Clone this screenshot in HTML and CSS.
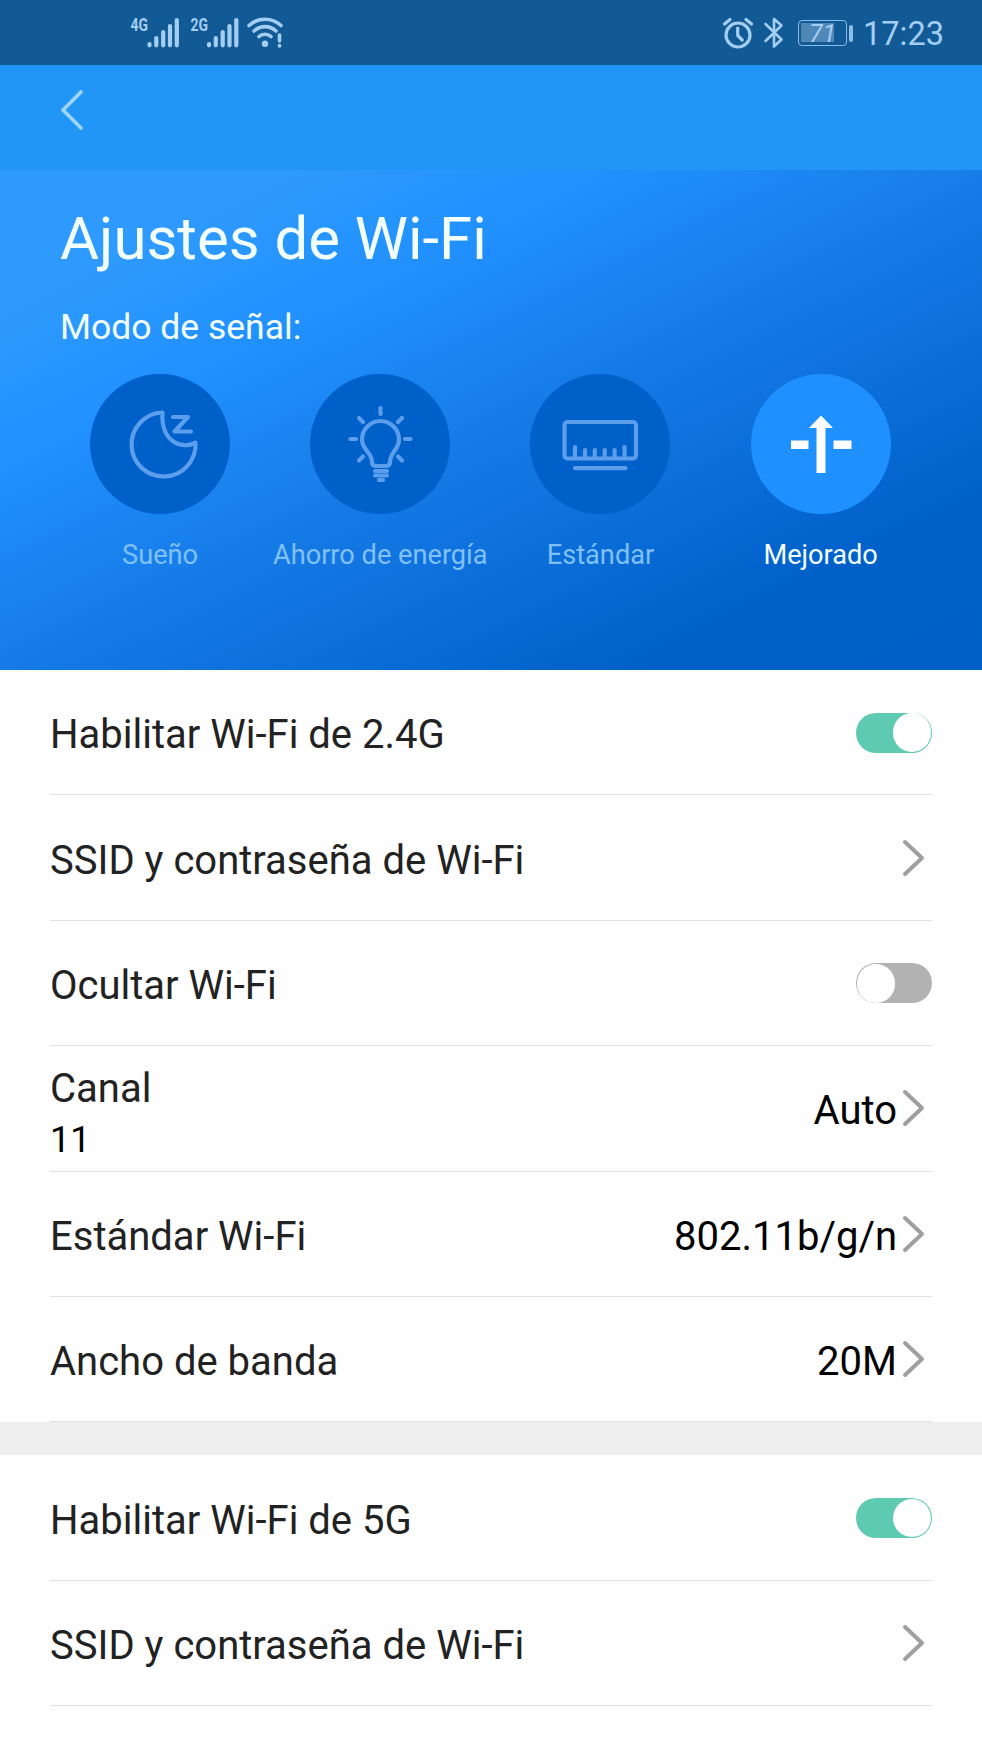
FILE: index.html
```
<!DOCTYPE html>
<html lang="es">
<head>
    <meta charset="UTF-8">
    <meta name="viewport" content="width=device-width, initial-scale=1.0">
    <title>Ajustes de Wi-Fi</title>
    <link rel="stylesheet" href="styles.css">
</head>
<body>

<div class="status-bar">
    <div class="status-left">
        <svg class="signal" width="55" height="40" viewBox="-3 -3 55 40">
            <text x="-0.5" y="15" textLength="17.5" lengthAdjust="spacingAndGlyphs">4G</text>
            <path d="M18.5 28V29.3M25.3 22V29.3M32.2 16V29.3M39 10V29.3M45.8 4V29.3"/>
        </svg>
        <svg class="signal" width="55" height="40" viewBox="-3 -3 55 40">
            <text x="-0.5" y="15" textLength="17.5" lengthAdjust="spacingAndGlyphs">2G</text>
            <path d="M18 28V29.3M24.8 22V29.3M31.7 16V29.3M38.5 10V29.3M45.3 4V29.3"/>
        </svg>
        <svg class="wifi" width="40" height="34" viewBox="0 0 40 34">
            <path d="M3 9.5a23.5 23.5 0 0 1 32 0M8 15a16 16 0 0 1 22 0M13 20.5a9 9 0 0 1 12 0M33.5 19v6M33.5 29.5v.5"/>
            <circle cx="19" cy="27.7" r="3.2"/>
        </svg>
    </div>
    <div class="status-right">
        <svg class="alarm" width="30" height="34" viewBox="0 0 30 34">
            <circle cx="15" cy="18" r="12"/>
            <path d="M14.7 11v7.5l4.5 4.5M1.5 7l5.5-4.5M23 2.5l5.5 4.5"/>
        </svg>
        <svg class="bluetooth" width="20" height="34" viewBox="0 0 20 34">
            <path d="M1.5 8l16 15.5-7.5 7V3l7.5 6.5L1.5 25"/>
        </svg>
        <div class="battery"><div class="battery-body"><span>71</span></div><div class="battery-tip"></div></div>
        <span class="time">17:23</span>
    </div>
</div>

<div class="top-bar">
    <svg class="back" width="26" height="44" viewBox="0 0 26 44">
        <path d="M21 4L3 22l18 18"/>
    </svg>
</div>

<div class="hero">
    <h1>Ajustes de Wi-Fi</h1>
    <p class="subtitle">Modo de señal:</p>
    <div class="modes">
        <div class="mode">
            <div class="circle">
                <svg width="140" height="140" viewBox="0 0 140 140">
                    <path d="M72.5 38.5A32 32 0 1 0 105.5 68.5C93.5 76 70.5 69 72.5 38.5Z"/>
                    <path d="M83 43H98L84.5 57.5H101"/>
                </svg>
            </div>
            <span>Sueño</span>
        </div>
        <div class="mode">
            <div class="circle">
                <svg width="140" height="140" viewBox="0 0 140 140">
                    <path d="M62 88C62 78 52 76 52 65.5a18.5 18.5 0 0 1 37 0C89 76 80 78 80 88Q80 92 76 92H66Q62 92 62 88Z"/>
                    <path d="M70.5 34v6M40.5 65h5.5M95 65h5.5M49 44l4 4M92 44l-4 4M49 86.5l4-4M92 86.5l-4-4M65 97h12M65 101.5h12M69 106h4"/>
                </svg>
            </div>
            <span>Ahorro de energía</span>
        </div>
        <div class="mode">
            <div class="circle">
                <svg width="140" height="140" viewBox="0 0 140 140">
                    <rect x="34.5" y="48" width="71.5" height="36.5" rx="3"/>
                    <path d="M45 73V84M55 76V84M64.8 76V84M74.7 76V84M84.6 76V84M94.5 73V84M45 94.2H95.5"/>
                </svg>
            </div>
            <span>Estándar</span>
        </div>
        <div class="mode active">
            <div class="circle">
                <svg width="140" height="140" viewBox="0 0 140 140">
                    <path d="M70 41.5L82 54H74.5V99H65.5V54H58ZM40 66.5H57.5V75H40ZM82.5 66.5H100.5V75H82.5Z"/>
                </svg>
            </div>
            <span>Mejorado</span>
        </div>
    </div>
</div>

<div class="list">
    <div class="row">
        <span class="label">Habilitar Wi-Fi de 2.4G</span>
        <div class="switch on"><div class="knob"></div></div>
    </div>
    <div class="row">
        <span class="label">SSID y contraseña de Wi-Fi</span>
        <svg class="arrow" width="22" height="40" viewBox="0 0 22 40"><path d="M2 4L19 20L2 36"/></svg>
    </div>
    <div class="row">
        <span class="label">Ocultar Wi-Fi</span>
        <div class="switch"><div class="knob"></div></div>
    </div>
    <div class="row">
        <div class="label-group">
            <span class="label">Canal</span>
            <span class="note">11</span>
        </div>
        <span class="value">Auto</span>
        <svg class="arrow" width="22" height="40" viewBox="0 0 22 40"><path d="M2 4L19 20L2 36"/></svg>
    </div>
    <div class="row">
        <span class="label">Estándar Wi-Fi</span>
        <span class="value">802.11b/g/n</span>
        <svg class="arrow" width="22" height="40" viewBox="0 0 22 40"><path d="M2 4L19 20L2 36"/></svg>
    </div>
    <div class="row">
        <span class="label">Ancho de banda</span>
        <span class="value">20M</span>
        <svg class="arrow" width="22" height="40" viewBox="0 0 22 40"><path d="M2 4L19 20L2 36"/></svg>
    </div>
</div>

<div class="separator"></div>

<div class="list">
    <div class="row">
        <span class="label">Habilitar Wi-Fi de 5G</span>
        <div class="switch on"><div class="knob"></div></div>
    </div>
    <div class="row">
        <span class="label">SSID y contraseña de Wi-Fi</span>
        <svg class="arrow" width="22" height="40" viewBox="0 0 22 40"><path d="M2 4L19 20L2 36"/></svg>
    </div>
</div>

</body>
</html>
```
FILE: styles.css
```
* {
    margin: 0;
    padding: 0;
    box-sizing: border-box;
    font-family: 'Roboto', sans-serif;
}

body {
    width: 982px;
    height: 1745px;
    overflow: hidden;
    background-color: #fefefe;
}

svg {
    display: block;
    flex-shrink: 0;
    overflow: visible;
    fill: none;
    stroke-linecap: round;
    stroke-linejoin: round;
}

/* status bar */
.status-bar {
    display: flex;
    justify-content: space-between;
    align-items: center;
    height: 65px;
    padding: 0 38px 0 128px;
    background-color: #125a96;
    color: #a3cdf1;
}

.status-left,
.status-right {
    display: flex;
    align-items: center;
}

.signal {
    margin-right: 5px;
}

.signal text {
    fill: #a3cdf1;
    font-size: 19px;
    font-weight: 700;
}

.signal path {
    stroke: #a3cdf1;
    stroke-width: 4.2;
}

.wifi {
    margin-left: -2px;
}

.wifi path {
    stroke: #a3cdf1;
    stroke-width: 3.6;
}

.wifi circle {
    fill: #a3cdf1;
}

.alarm {
    margin-top: 2px;
    stroke: #a3cdf1;
    stroke-width: 3.2;
}

.bluetooth {
    margin-left: 11px;
    stroke: #a3cdf1;
    stroke-width: 2.6;
}

.battery {
    display: flex;
    align-items: center;
    gap: 2px;
    margin-left: 14px;
    margin-top: 1px;
}

.battery-body {
    width: 49px;
    height: 26px;
    padding: 2px;
    border: 1.5px solid #8dbde6;
    border-radius: 4px;
    background: linear-gradient(#4f87b7, #4f87b7) 2px 2px / 33px 19px no-repeat;
    line-height: 21px;
    text-align: center;
}

.battery-body span {
    font-size: 25px;
    font-style: italic;
}

.battery-tip {
    width: 4px;
    height: 17px;
    border-radius: 2px;
    background-color: #8dbde6;
}

.time {
    margin-top: 3px;
    margin-left: 10px;
    font-size: 32.5px;
}

/* header */
.top-bar {
    height: 105px;
    padding: 23px 0 0 60px;
    background-color: #2196f6;
}

.back path {
    stroke: #9dd5fc;
    stroke-width: 3.8;
}

.hero {
    height: 500px;
    padding: 0 50px;
    background: linear-gradient(154deg, #2e9aff 0%, #2e9aff 15%, #2090fe 31%, #1579e5 53%, #0060ca 83%, #005fc9 100%);
    color: #f2ffff;
}

.hero h1 {
    padding: 34px 0 0 10px;
    font-size: 59.9px;
    font-weight: 400;
    line-height: 70px;
}

.subtitle {
    margin-top: 32px;
    padding-left: 10px;
    font-size: 35.5px;
    line-height: 42px;
}

.modes {
    display: flex;
    margin-top: 26px;
}

.mode {
    display: flex;
    flex-direction: column;
    align-items: center;
    width: 220.2px;
    font-size: 27.2px;
    color: #80c1fb;
    white-space: nowrap;
}

.mode > span {
    margin-top: 25px;
    line-height: 32px;
}

.circle {
    width: 140px;
    height: 140px;
    border-radius: 50%;
    background-color: #0060ca;
}

.circle svg {
    stroke: #5c9eec;
    stroke-width: 4.2;
}

.mode.active {
    color: #f2ffff;
}

.mode.active .circle {
    background-color: #1e90ff;
}

.mode.active svg {
    fill: #fff;
    stroke: none;
}

/* settings */
.list {
    padding: 0 50px;
}

.row {
    display: flex;
    align-items: center;
    height: 125.4px;
    border-bottom: 1px solid #e2e2e2;
}

.label {
    margin-right: auto;
    padding-top: 6px;
    font-size: 40px;
    line-height: 50px;
    color: #222;
}

.label-group {
    display: flex;
    flex-direction: column;
    margin-right: auto;
    padding-top: 5px;
}

.note {
    padding-top: 2px;
    font-size: 36px;
    line-height: 48px;
    color: #000;
}

.value {
    padding-top: 6px;
    margin-right: 6px;
    font-size: 40px;
    line-height: 50px;
    color: #000;
}

.arrow {
    margin-right: 7px;
}

.arrow path {
    stroke: #9f9f9f;
    stroke-width: 4;
}

.switch {
    display: flex;
    align-items: center;
    width: 76.4px;
    height: 40px;
    margin-top: 1px;
    padding: 0 1px;
    border-radius: 20px;
    background-color: #b2b2b2;
}

.switch.on {
    justify-content: flex-end;
    background-color: #5ecab1;
}

.knob {
    width: 38.5px;
    height: 38.5px;
    border-radius: 50%;
    background-color: #fff;
}

.separator {
    height: 33px;
    background-color: #eee;
}
```
